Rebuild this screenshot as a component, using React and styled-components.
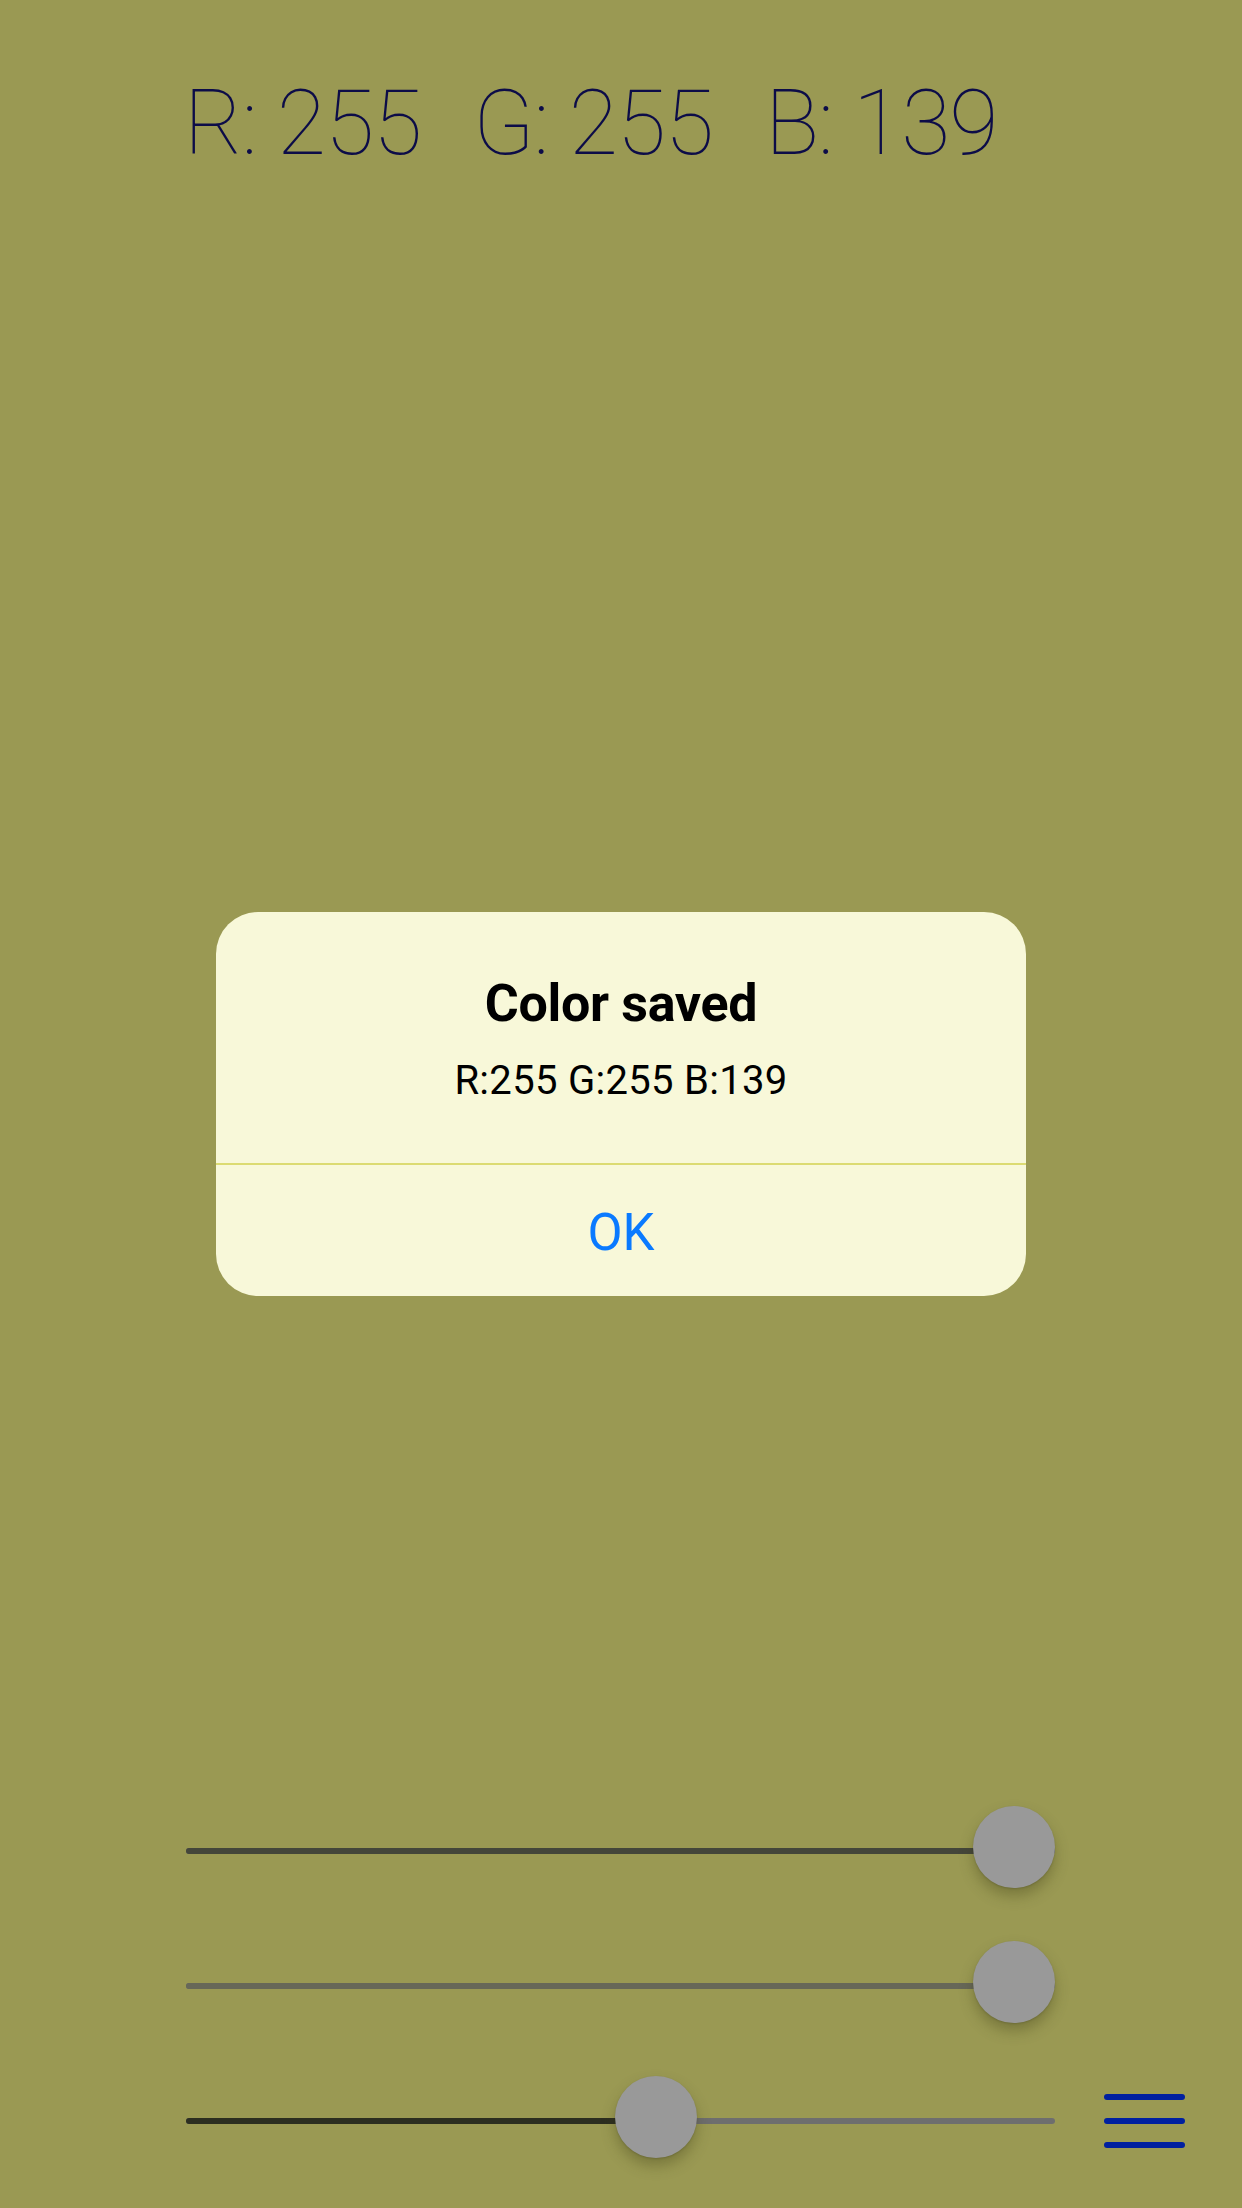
import React from "react";
import styled, { createGlobalStyle } from "styled-components";

const Global = createGlobalStyle`
    html, body {
        margin: 0;
        padding: 0;
        background: #9a9953;
    }
    * { box-sizing: border-box; }
`;

const Screen = styled.div`
    position: relative;
    width: 1242px;
    height: 2208px;
    display: flex;
    flex-direction: column;
    background-color: #9a9953;
    font-family: Roboto, "Liberation Sans", sans-serif;
    overflow: hidden;
`;

const Readout = styled.div`
    display: flex;
    gap: 52px;
    padding: 70px 0 0 184px;
    font-weight: 100;
    font-size: 90px;
    line-height: 1.2;
    color: #0c0c48;
    letter-spacing: -1.2px;
`;

const Sliders = styled.div`
    margin-top: auto;
    padding-bottom: 20px;
    display: flex;
    flex-direction: column;
`;

const Row = styled.div`
    height: 135px;
    display: flex;
    align-items: center;
    padding-left: 186px;
`;

const Track = styled.div`
    position: relative;
    width: 869px;
    height: 6px;
    border-radius: 3px;
    background: ${p => p.rest};
`;

const Fill = styled.div`
    height: 100%;
    border-radius: 3px;
    background: ${p => p.color};
`;

const Thumb = styled.div`
    position: absolute;
    top: -42px;
    width: 82px;
    height: 82px;
    border-radius: 50%;
    background: #999999;
    box-shadow: 0 8px 14px rgba(60, 60, 20, 0.35), 0 1px 2px rgba(0, 0, 0, 0.15);
`;

const Menu = styled.button`
    margin-left: 49px;
    width: 81px;
    height: 60px;
    padding: 0;
    border: none;
    background: none;
    display: flex;
    flex-direction: column;
    justify-content: center;
    gap: 18px;
`;

const Bar = styled.span`
    display: block;
    width: 81px;
    height: 6px;
    border-radius: 3px;
    background: #0020a0;
`;

const Dialog = styled.div`
    position: absolute;
    left: 216px;
    top: 912px;
    width: 810px;
    height: 384px;
    border-radius: 42px;
    background: #f8f8d9;
    display: flex;
    flex-direction: column;
    overflow: hidden;
`;

const Body = styled.div`
    height: 253px;
    display: flex;
    flex-direction: column;
    align-items: center;
    padding-top: 61px;
    border-bottom: 2px solid #dcdb72;
`;

const Title = styled.div`
    font-size: 52px;
    font-weight: 700;
    color: #000;
    letter-spacing: -0.3px;
`;

const Message = styled.div`
    margin-top: 23px;
    font-size: 40px;
    color: #000;
    letter-spacing: 0.3px;
`;

const Ok = styled.div`
    flex: 1;
    display: flex;
    align-items: center;
    justify-content: center;
    padding-top: 4px;
    font-size: 51px;
    color: #0a7aff;
`;

const sliders = [
    { value: 255, fill: "#44463a", rest: "#6e6e6e" },
    { value: 255, fill: "#676858", rest: "#6e6e6e" },
    { value: 139, fill: "#2c2e20", rest: "#6e6e6e" },
];

const App = () => {
    return (
        <Screen>
            <Global />
            <Readout>
                <span>R: 255</span>
                <span>G: 255</span>
                <span>B: 139</span>
            </Readout>
            <Sliders>
                {sliders.map((s, i) => {
                    const pos = (s.value / 255) * (869 - 82);
                    return (
                        <Row key={i}>
                            <Track rest={s.rest}>
                                <Fill color={s.fill} style={{ width: pos + 41 }} />
                                <Thumb style={{ left: pos }} />
                            </Track>
                            {i === 2 && (
                                <Menu aria-label="menu">
                                    <Bar />
                                    <Bar />
                                    <Bar />
                                </Menu>
                            )}
                        </Row>
                    );
                })}
            </Sliders>
            <Dialog>
                <Body>
                    <Title>Color saved</Title>
                    <Message>R:255 G:255 B:139</Message>
                </Body>
                <Ok>OK</Ok>
            </Dialog>
        </Screen>
    );
};

export default App;
